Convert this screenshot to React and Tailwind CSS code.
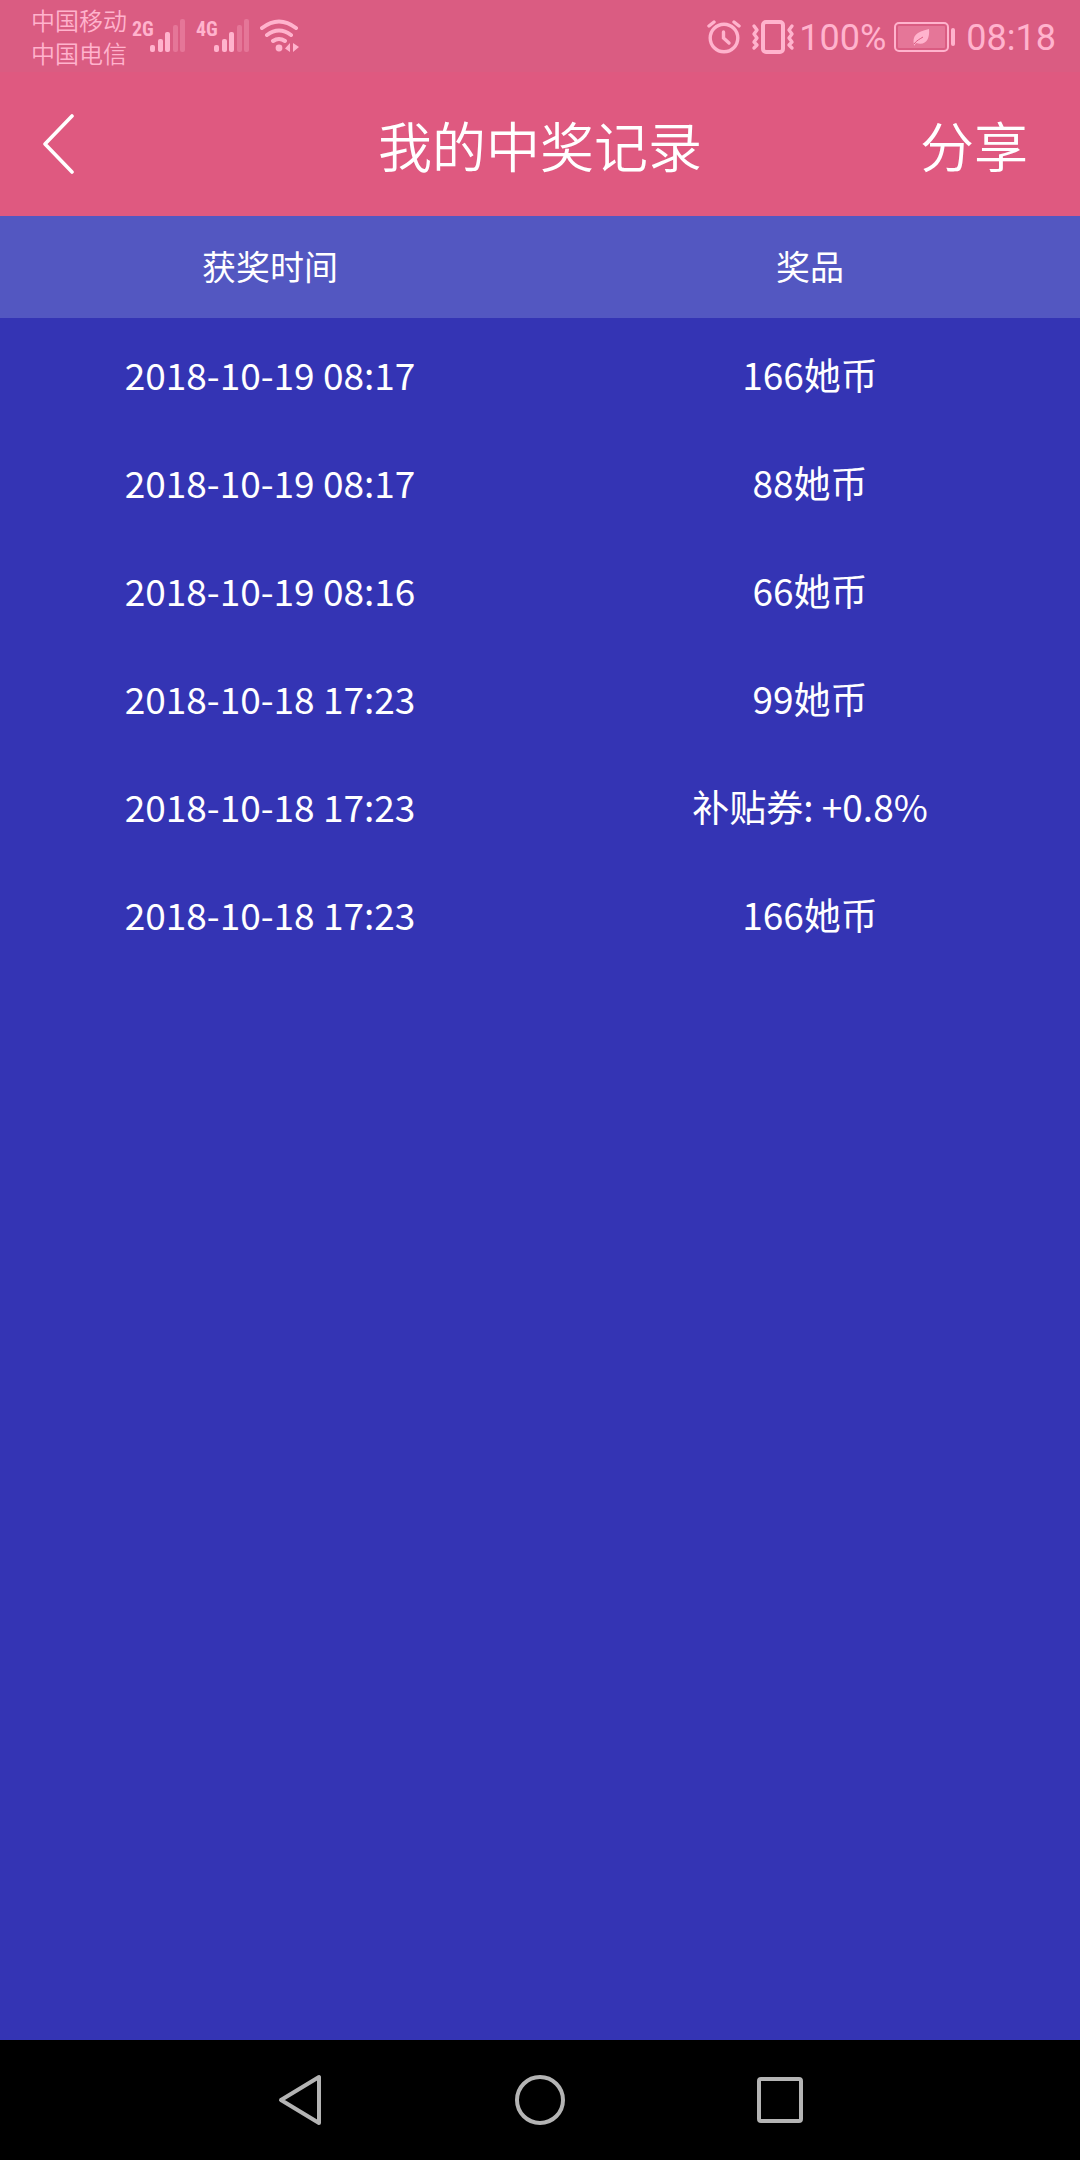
import React from "react";

const records = [
  { time: "2018-10-19 08:17", prize: "166她币" },
  { time: "2018-10-19 08:17", prize: "88她币" },
  { time: "2018-10-19 08:16", prize: "66她币" },
  { time: "2018-10-18 17:23", prize: "99她币" },
  { time: "2018-10-18 17:23", prize: "补贴券: +0.8%" },
  { time: "2018-10-18 17:23", prize: "166她币" },
];

const Signal = ({ type }) => (
  <div className="flex">
    <span className="w-[18px] font-['Roboto_Condensed',Roboto,sans-serif] text-[20px] leading-[20px] font-bold">
      {type}
    </span>
    <svg width="36" height="34" viewBox="0 0 36 34" fill="currentColor">
      <rect x="0" y="26" width="5" height="7" rx="2" />
      <rect x="8" y="20" width="5" height="13" rx="2" />
      <rect x="15" y="13" width="5" height="20" rx="2" />
      <rect x="23" y="6" width="5" height="27" rx="2" opacity="0.3" />
      <rect x="30" y="0" width="5" height="33" rx="2" opacity="0.3" />
    </svg>
  </div>
);

const WifiIcon = () => (
  <svg width="40" height="34" viewBox="0 0 40 34" fill="none" stroke="currentColor" strokeWidth="4" strokeLinecap="round">
    <path d="M2 9Q19-4 36 9M7 16Q19 7 31 16M13 22Q19 18 25 22" />
    <circle cx="19" cy="29" r="3.4" fill="currentColor" stroke="none" />
    <path d="M30 24V33L25 29.5zM33 24L39 28L33 33z" fill="currentColor" stroke="none" />
  </svg>
);

const AlarmIcon = () => (
  <svg width="34" height="34" viewBox="0 0 34 34" fill="none" stroke="currentColor" strokeWidth="3.4" strokeLinecap="round">
    <circle cx="17" cy="18" r="13.8" />
    <path d="M2 6L7 2M27 2L32 6" />
    <path d="M16.5 12V18L22 23" />
  </svg>
);

const VibrateIcon = () => (
  <svg width="44" height="34" viewBox="0 0 44 34" fill="none" stroke="currentColor" strokeWidth="3.4" strokeLinecap="round" strokeLinejoin="round">
    <rect x="12" y="2" width="20" height="30" rx="3" strokeWidth="4" />
    <path d="M3 6L6 10L3 14L6 18L3 22L6 25L3 28" />
    <path d="M41 6L38 10L41 14L38 18L41 22L38 25L41 28" />
  </svg>
);

const BatteryIcon = () => (
  <svg width="62" height="30" viewBox="0 0 62 30" fill="none" stroke="currentColor">
    <rect x="1" y="1" width="53" height="28" rx="4" strokeWidth="2" />
    <rect x="4" y="4" width="47" height="22" rx="1" fill="currentColor" stroke="none" opacity="0.3" />
    <path d="M20 23C18 14 22 10 35 7C36 17 32 24 22 21L20 24z" fill="currentColor" stroke="none" />
    <path d="M20 22C23 18 26 17 29 15" stroke="#dc5b80" strokeWidth="1" />
    <rect x="57" y="6" width="4" height="18" rx="2" fill="currentColor" stroke="none" />
  </svg>
);

const StatusBar = () => (
  <div className="flex h-[72px] items-center justify-between bg-[#da5c82] pr-6 pl-[31px] text-[#ffb3cd]">
    <div className="flex items-start">
      <div className="w-[101px] text-[24px] leading-[33px] font-[350]">
        <div>中国移动</div>
        <div>中国电信</div>
      </div>
      <div className="flex gap-2.5 pt-4">
        <Signal type="2G" />
        <Signal type="4G" />
        <WifiIcon />
      </div>
    </div>
    <div className="flex items-center pt-0.5 font-[Roboto,sans-serif] text-[36px] leading-[42px]">
      <AlarmIcon />
      <span className="ml-2.5">
        <VibrateIcon />
      </span>
      <span className="ml-1 pt-0.5">100%</span>
      <span className="mr-2.5 ml-2">
        <BatteryIcon />
      </span>
      <span className="pt-0.5">08:18</span>
    </div>
  </div>
);

const NavBar = () => (
  <nav className="flex h-[120px] items-center justify-center gap-48 bg-black text-[#b4b4b4]">
    <button aria-label="返回">
      <svg width="46" height="52" viewBox="0 0 46 52" fill="none" stroke="currentColor" strokeWidth="4" strokeLinejoin="round">
        <path d="M4 26L42 3V49z" />
      </svg>
    </button>
    <button aria-label="主页">
      <svg width="50" height="50" viewBox="0 0 50 50" fill="none" stroke="currentColor" strokeWidth="4">
        <circle cx="25" cy="25" r="23" />
      </svg>
    </button>
    <button aria-label="最近任务">
      <svg width="46" height="46" viewBox="0 0 46 46" fill="none" stroke="currentColor" strokeWidth="4">
        <rect x="2" y="2" width="42" height="42" rx="2" />
      </svg>
    </button>
  </nav>
);

const App = () => {
  return (
    <div className="flex min-h-screen flex-col bg-[#3434b4] font-['Noto_Sans_CJK_SC',sans-serif] text-white">
      <StatusBar />
      <header className="grid h-36 grid-cols-[1fr_auto_1fr] items-center bg-[#df5980] px-[42px] text-[54px] font-[350]">
        <button aria-label="返回" className="justify-self-start">
          <svg width="34" height="60" viewBox="0 0 34 60" fill="none" stroke="currentColor" strokeWidth="3.6" strokeLinecap="round" strokeLinejoin="round">
            <path d="M30 2L3 30L30 58" />
          </svg>
        </button>
        <h1>我的中奖记录</h1>
        <button className="mr-2.5 justify-self-end">分享</button>
      </header>
      <main className="grow">
        <table className="w-full table-fixed text-center">
          <thead>
            <tr className="h-[102px] bg-[#5357c1] text-[34px]">
              <th className="pb-1 font-normal">获奖时间</th>
              <th className="pb-1 font-normal">奖品</th>
            </tr>
          </thead>
          <tbody>
            {records.map((record, index) => (
              <tr key={index} className="h-[108px] text-[37px]">
                <td className="pt-1.5">{record.time}</td>
                <td className="pt-1.5">{record.prize}</td>
              </tr>
            ))}
          </tbody>
        </table>
      </main>
      <NavBar />
    </div>
  );
};

export default App;
